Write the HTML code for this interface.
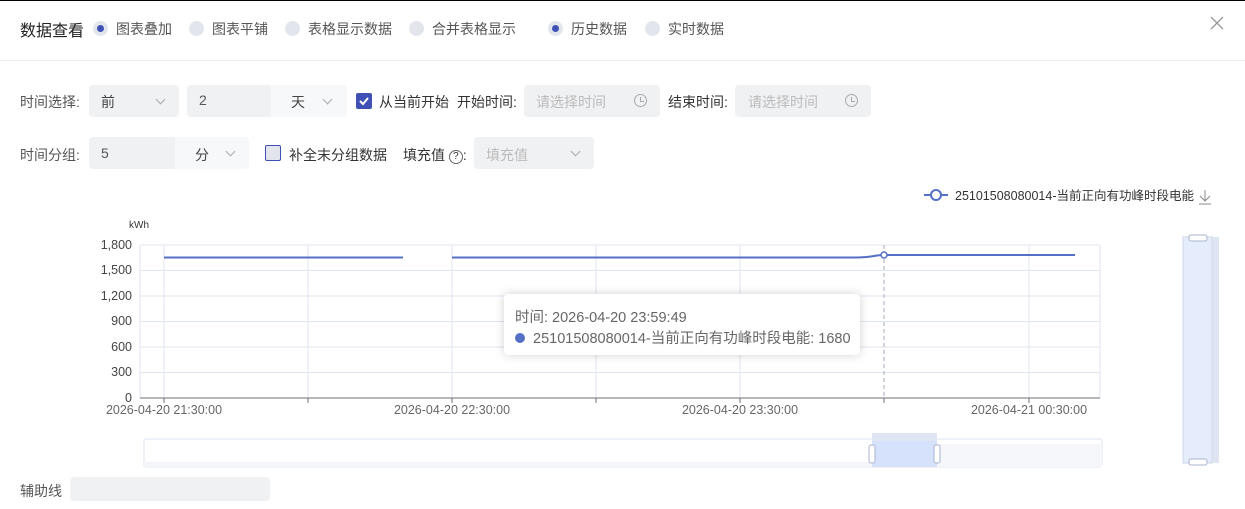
<!DOCTYPE html>
<html><head><meta charset="utf-8"><style>
*{box-sizing:border-box;margin:0;padding:0}
body{width:1245px;height:509px;background:#fff;font-family:"Liberation Sans","Noto Sans CJK SC",sans-serif;color:#555;font-size:14px;position:relative;overflow:hidden}
.a{position:absolute;white-space:nowrap}
.rd{position:absolute;width:15px;height:15px;border-radius:50%;background:#e3e5ec}
.rd.on::after{content:"";position:absolute;left:4px;top:4px;width:7px;height:7px;border-radius:50%;background:#3f51b5}
.box{position:absolute;height:32px;border-radius:4px;background:#f0f1f3}
.chev{position:absolute;width:7px;height:7px;border-right:1px solid #aaa;border-bottom:1px solid #aaa;transform:rotate(45deg)}
.ph{color:#bbb}
.clk{position:absolute;width:13px;height:13px;border:1px solid #aaa;border-radius:50%}
.clk::after{content:"";position:absolute;left:5px;top:2px;width:3px;height:4px;border-left:1px solid #aaa;border-bottom:1px solid #aaa}
</style></head><body>
<div class="a" style="left:0;top:0;width:1245px;height:1px;background:#000"></div>
<div class="a" style="left:20px;top:17px;font-size:16px;color:#222">数据查看</div>
<div class="rd on" style="left:93px;top:21px"></div><div class="a" style="left:116px;top:19px">图表叠加</div>
<div class="rd" style="left:189px;top:21px"></div><div class="a" style="left:212px;top:19px">图表平铺</div>
<div class="rd" style="left:285px;top:21px"></div><div class="a" style="left:308px;top:19px">表格显示数据</div>
<div class="rd" style="left:409px;top:21px"></div><div class="a" style="left:432px;top:19px">合并表格显示</div>
<div class="rd on" style="left:548px;top:21px"></div><div class="a" style="left:571px;top:19px">历史数据</div>
<div class="rd" style="left:645px;top:21px"></div><div class="a" style="left:668px;top:19px">实时数据</div>
<svg class="a" style="left:1210px;top:16px" width="14" height="14"><path d="M1 1L13 13M13 1L1 13" stroke="#999" stroke-width="1.3"/></svg>
<div class="a" style="left:0;top:60px;width:1245px;height:1px;background:#eceef2"></div>

<div class="a" style="left:20px;top:92px">时间选择:</div>
<div class="box" style="left:89px;top:85px;width:90px"></div><div class="a" style="left:101px;top:92px;color:#444">前</div><div class="chev" style="left:157px;top:96px"></div>
<div class="box" style="left:187px;top:85px;width:160px;background:#f7f8fa"></div><div class="box" style="left:187px;top:85px;width:84px;border-radius:4px 0 0 4px"></div>
<div class="a" style="left:199px;top:92px">2</div><div class="a" style="left:291px;top:92px;color:#444">天</div><div class="chev" style="left:324px;top:96px"></div>
<div class="a" style="left:356px;top:93px;width:16px;height:16px;background:#3f51b5;border-radius:2px"><svg width="16" height="16"><path d="M4 8l3 3 5-6" stroke="#fff" stroke-width="2" fill="none"/></svg></div>
<div class="a" style="left:379px;top:92px;color:#333">从当前开始</div>
<div class="a" style="left:457px;top:92px;color:#333">开始时间:</div>
<div class="box" style="left:524px;top:85px;width:136px"></div><div class="a ph" style="left:536px;top:92px">请选择时间</div><div class="clk" style="left:634px;top:94px"></div>
<div class="a" style="left:668px;top:92px;color:#333">结束时间:</div>
<div class="box" style="left:735px;top:85px;width:136px"></div><div class="a ph" style="left:748px;top:92px">请选择时间</div><div class="clk" style="left:845px;top:94px"></div>

<div class="a" style="left:20px;top:145px">时间分组:</div>
<div class="box" style="left:89px;top:137px;width:160px;background:#f7f8fa"></div><div class="box" style="left:89px;top:137px;width:86px;border-radius:4px 0 0 4px"></div>
<div class="a" style="left:101px;top:145px">5</div><div class="a" style="left:195px;top:145px;color:#444">分</div><div class="chev" style="left:227px;top:148px"></div>
<div class="a" style="left:265px;top:145px;width:16px;height:16px;border:1px solid #3f51b5;border-radius:2px;background:#e3e5ec"></div>
<div class="a" style="left:289px;top:145px;color:#333">补全末分组数据</div>
<div class="a" style="left:403px;top:145px;color:#333">填充值 <span style="display:inline-block;width:14px;height:14px;border:1px solid #666;border-radius:50%;font-size:10px;text-align:center;line-height:12px;vertical-align:1px">?</span>:</div>
<div class="box" style="left:474px;top:137px;width:120px"></div><div class="a ph" style="left:486px;top:145px">填充值</div><div class="chev" style="left:572px;top:148px"></div>

<svg class="a" style="left:0;top:180px" width="1245" height="300" font-family="Liberation Sans,Noto Sans CJK SC,sans-serif">
<line x1="924" y1="15" x2="948" y2="15" stroke="#5470c6" stroke-width="2"/><circle cx="936" cy="15" r="5" fill="#fff" stroke="#5470c6" stroke-width="2"/>
<text x="955" y="20" font-size="12.5" fill="#333">25101508080014-当前正向有功峰时段电能</text>
<path d="M1205 10v11M1200 16l5 5 5-5M1199 24h12" stroke="#888" fill="none"/>
<text x="129" y="48" font-size="10" fill="#333">kWh</text>
<g stroke="#e0e6f1">
<line x1="140" y1="65" x2="1100" y2="65"/><line x1="140" y1="90.5" x2="1100" y2="90.5"/><line x1="140" y1="116" x2="1100" y2="116"/><line x1="140" y1="141.5" x2="1100" y2="141.5"/><line x1="140" y1="167" x2="1100" y2="167"/><line x1="140" y1="192.5" x2="1100" y2="192.5"/>
<line x1="140" y1="65" x2="140" y2="218"/><line x1="1100" y1="65" x2="1100" y2="218"/>
<line x1="164" y1="65" x2="164" y2="218"/><line x1="308" y1="65" x2="308" y2="218"/><line x1="452" y1="65" x2="452" y2="218"/><line x1="596" y1="65" x2="596" y2="218"/><line x1="740" y1="65" x2="740" y2="218"/><line x1="1029" y1="65" x2="1029" y2="218"/>
</g>
<line x1="884" y1="65" x2="884" y2="218" stroke="#aab" stroke-dasharray="4 3"/>
<line x1="140" y1="218" x2="1100" y2="218" stroke="#6e7079"/>
<g stroke="#6e7079"><line x1="164" y1="218" x2="164" y2="223"/><line x1="308" y1="218" x2="308" y2="223"/><line x1="452" y1="218" x2="452" y2="223"/><line x1="596" y1="218" x2="596" y2="223"/><line x1="740" y1="218" x2="740" y2="223"/><line x1="884" y1="218" x2="884" y2="223"/><line x1="1029" y1="218" x2="1029" y2="223"/></g>
<g font-size="12.5" fill="#444" text-anchor="end"><text x="132" y="69">1,800</text><text x="132" y="94">1,500</text><text x="132" y="120">1,200</text><text x="132" y="145">900</text><text x="132" y="171">600</text><text x="132" y="196">300</text><text x="132" y="222">0</text></g>
<g font-size="12.5" fill="#666" text-anchor="middle"><text x="164" y="234">2026-04-20 21:30:00</text><text x="452" y="234">2026-04-20 22:30:00</text><text x="740" y="234">2026-04-20 23:30:00</text><text x="1029" y="234">2026-04-21 00:30:00</text></g>
<path d="M164 77.5H403M452 77.5H858C872 77.5 874 75 884 75H1075" stroke="#5470c6" stroke-width="2" fill="none"/>
<circle cx="884" cy="75" r="3" fill="#fff" stroke="#5470c6" stroke-width="1.5"/>
<rect x="144" y="259" width="958" height="28" rx="2" fill="#fff" stroke="#dde3f0"/>
<rect x="144" y="282" width="958" height="5" fill="#f3f5fa"/>
<rect x="937" y="264" width="165" height="23" fill="#f5f7fb"/>
<rect x="872" y="253" width="65" height="8" fill="#dfe5f3"/>
<rect x="872" y="261" width="65" height="26" fill="#d6e1fb"/>
<rect x="869" y="265" width="6" height="18" rx="2" fill="#fff" stroke="#a8b3cc"/><rect x="934" y="265" width="6" height="18" rx="2" fill="#fff" stroke="#a8b3cc"/>
<rect x="1183" y="57" width="36" height="226" fill="#dfe5f3"/>
<rect x="1183" y="57" width="29" height="226" fill="#e5edfc" stroke="#cfd8ea"/>
<rect x="1189" y="55" width="18" height="6" rx="2" fill="#fff" stroke="#a8b3cc"/><rect x="1189" y="279" width="18" height="6" rx="2" fill="#fff" stroke="#a8b3cc"/>
</svg>

<div class="a" style="left:504px;top:294px;width:356px;height:61px;background:#fff;border-radius:4px;box-shadow:0 0 10px rgba(0,0,0,.18)"></div>
<div class="a" style="left:515px;top:306px;font-size:14.5px;color:#666">时间: 2026-04-20 23:59:49</div>
<div class="a" style="left:515px;top:333px;width:10px;height:10px;border-radius:50%;background:#5470c6"></div>
<div class="a" style="left:533px;top:327px;font-size:14.5px;color:#666">25101508080014-当前正向有功峰时段电能: 1680</div>

<div class="a" style="left:20px;top:481px">辅助线</div>
<div class="a" style="left:70px;top:477px;width:200px;height:24px;background:#f0f1f3;border-radius:4px"></div>
</body></html>
